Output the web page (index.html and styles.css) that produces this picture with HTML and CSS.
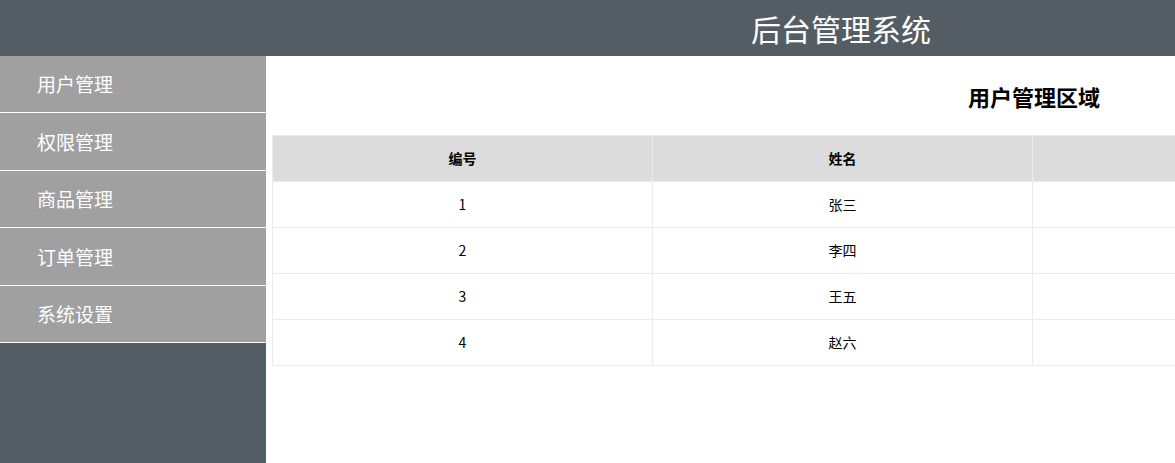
FILE: index.html
```html
<!DOCTYPE html>
<html lang="zh">
<head>
<meta charset="utf-8">
<title>后台管理系统</title>
<link rel="stylesheet" href="styles.css">
</head>
<body>
<header class="topbar">
  <h1 class="brand">后台管理系统</h1>
</header>
<div class="layout">
  <nav class="sidebar">
    <a class="nav-item">用户管理</a>
    <a class="nav-item">权限管理</a>
    <a class="nav-item">商品管理</a>
    <a class="nav-item">订单管理</a>
    <a class="nav-item">系统设置</a>
  </nav>
  <main class="content">
    <h2 class="section-title">用户管理区域</h2>
    <table class="data-table">
      <thead>
        <tr><th>编号</th><th>姓名</th><th></th></tr>
      </thead>
      <tbody>
        <tr><td>1</td><td>张三</td><td></td></tr>
        <tr><td>2</td><td>李四</td><td></td></tr>
        <tr><td>3</td><td>王五</td><td></td></tr>
        <tr><td>4</td><td>赵六</td><td></td></tr>
      </tbody>
    </table>
  </main>
</div>
</body>
</html>
```

FILE: styles.css
```css
html, body {
  margin: 0;
  padding: 0;
}
body {
  width: 1175px;
  height: 463px;
  overflow: hidden;
  font-family: "Noto Sans CJK SC", "Noto Sans", sans-serif;
  background: #fff;
}
.topbar {
  height: 56px;
  background: #545c64;
  display: flex;
  align-items: center;
}
.brand {
  margin: 0;
  padding-left: 751px;
  font-size: 30px;
  font-weight: normal;
  color: #fff;
  line-height: 1;
}
.layout {
  display: flex;
  height: 407px;
}
.sidebar {
  width: 266px;
  flex: none;
  background: #545c64;
  display: flex;
  flex-direction: column;
}
.nav-item {
  box-sizing: border-box;
  height: 57px;
  flex: none;
  border-bottom: 1px solid #fff;
  background: #a0a0a0;
  color: #fff;
  font-size: 19px;
  line-height: 1;
  padding-left: 37px;
  padding-bottom: 1px;
  display: flex;
  align-items: center;
}
.nav-item:nth-child(even) {
  height: 58px;
}
.content {
  flex: 1;
  overflow: hidden;
  padding-left: 6px;
}
.section-title {
  margin: 0;
  height: 79px;
  display: flex;
  align-items: center;
  justify-content: flex-end;
  padding-right: 75px;
  font-size: 22px;
  font-weight: bold;
  color: #000;
}
.data-table {
  border-collapse: collapse;
  table-layout: fixed;
  width: 1140px;
  flex: none;
  font-size: 14px;
  color: #000;
}
.data-table th,
.data-table td {
  border: 1px solid #ebebeb;
  height: 43px;
  padding: 0 0 2px;
  text-align: center;
  width: 379px;
}
.data-table th {
  background: #dcdcdc;
  font-weight: bold;
}
```
